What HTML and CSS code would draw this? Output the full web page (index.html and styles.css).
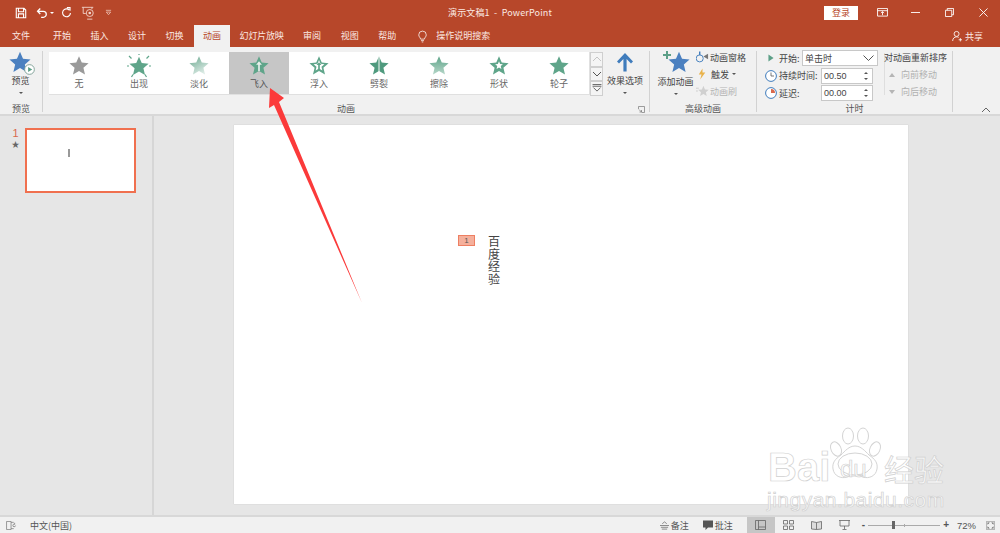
FILE: index.html
```html
<!DOCTYPE html>
<html lang="zh-CN">
<head>
<meta charset="utf-8">
<title>演示文稿1 - PowerPoint</title>
<link rel="stylesheet" href="styles.css">
</head>
<body>
<svg class="defs" width="0" height="0">
  <defs>
    <linearGradient id="fade" x1="0" y1="0" x2="0.6" y2="1"><stop offset="0" stop-color="#6aa88f"/><stop offset="1" stop-color="#dcebe5"/></linearGradient>
    <linearGradient id="wipe" x1="0" y1="0" x2="0" y2="1"><stop offset="0" stop-color="#5fa58a"/><stop offset="1" stop-color="#b5d6c8"/></linearGradient>
    <linearGradient id="split" x1="0" y1="0" x2="1" y2="0"><stop offset="0" stop-color="#4f9a7e"/><stop offset=".42" stop-color="#4f9a7e"/><stop offset=".5" stop-color="#cfe3da"/><stop offset=".58" stop-color="#4f9a7e"/><stop offset="1" stop-color="#4f9a7e"/></linearGradient>
    <symbol id="star" viewBox="0 0 24 24"><path d="M12 .8l3.3 7.7 8.2.8-6.2 5.4 1.900 8.200-7.200-4.300-7.200 4.300 1.900-8.200L.5 9.300l8.200-.8z"/></symbol>
  </defs>
</svg>
<div class="app">
  <header class="titlebar">
    <div class="qat">
      <svg class="qi save" viewBox="0 0 14 14"><path d="M1.500 1.500h9l2 2v9h-11z M4 1.500v4h6v-4 M4 12.500v-4.500h6v4.500" fill="none" stroke="#fff" stroke-width="1.300"/></svg>
      <svg class="qi undo" viewBox="0 0 14 14"><path d="M2 5h6.500a3.500 3.500 0 0 1 0 7H6 M5 1.800L1.800 5 5 8.200" fill="none" stroke="#fff" stroke-width="1.500"/></svg>
      <span class="caret white"></span>
      <svg class="qi redo" viewBox="0 0 14 14"><path d="M10.500 3.800a5 5 0 1 0 1.500 3.700 M7.500 .8h4v4" fill="none" stroke="#fff" stroke-width="1.400"/></svg>
      <svg class="qi touch" viewBox="0 0 16 16"><path d="M1 1.500h13 M2.500 1.500v7h3 M12.500 1.500v2" fill="none" stroke="#f4d8cf" stroke-width="1"/><circle cx="10" cy="8" r="4" fill="none" stroke="#f4d8cf"/><circle cx="10" cy="8" r="1.500" fill="#f4d8cf"/><path d="M7 15h6" stroke="#f4d8cf"/></svg>
      <svg class="qi more" viewBox="0 0 8 8"><path d="M1 1.500h6 M1.500 3.500h5l-2.500 3z" fill="none" stroke="#eec5b8" stroke-width=".9"/></svg>
    </div>
    <div class="doc-title">演示文稿1 &nbsp;-&nbsp; PowerPoint</div>
    <div class="winctl">
      <span class="login">登录</span>
      <svg class="wi ribbon-opt" viewBox="0 0 12 10"><path d="M.5.500h11v8.500H.5z M.5 3h11" fill="none" stroke="#fff"/><path d="M6 8V4M4.300 5.700L6 4l1.700 1.700" fill="none" stroke="#fff"/></svg>
      <svg class="wi min" viewBox="0 0 10 10"><path d="M0 5h10" stroke="#fff"/></svg>
      <svg class="wi restore" viewBox="0 0 10 10"><path d="M.5 2.500h7v7h-7z M2.500 2.500v-2h7v7h-2" fill="none" stroke="#fff"/></svg>
      <svg class="wi close" viewBox="0 0 10 10"><path d="M.5.500l9 9M9.500.500l-9 9" stroke="#fff"/></svg>
    </div>
  </header>

  <nav class="tabs">
    <span class="tab">文件</span>
    <span class="tab start">开始</span>
    <span class="tab">插入</span>
    <span class="tab">设计</span>
    <span class="tab">切换</span>
    <span class="tab active">动画</span>
    <span class="tab after-active">幻灯片放映</span>
    <span class="tab">审阅</span>
    <span class="tab">视图</span>
    <span class="tab">帮助</span>
    <svg class="bulb" viewBox="0 0 12 16"><path d="M3.500 11.500C3 9 1 8.500 1 5.800a5 5 0 0 1 10 0c0 2.700-2 3.200-2.500 5.700z M4 13.500h4 M5 15.300h2" fill="none" stroke="#fff"/></svg>
    <span class="tab search">操作说明搜索</span>
    <span class="share">
      <svg class="share-ico" viewBox="0 0 12 13"><circle cx="5.500" cy="4" r="3" fill="none" stroke="#fff"/><path d="M.8 12.500c0-3 2-5 4.700-5 1 0 1.800.2 2.500.7 M8 11h4M10 9v4" fill="none" stroke="#fff"/></svg>
      共享
    </span>
  </nav>

  <section class="ribbon">
    <div class="group g-preview">
      <div class="g-body preview-btn">
        <span class="preview-ico">
          <svg class="s22 blue"><use href="#star"/></svg>
          <svg class="play" viewBox="0 0 12 12"><circle cx="6" cy="6" r="5.300" fill="#fff" stroke="#7c9f95"/><path d="M4.500 3.200L9 6l-4.500 2.800z" fill="#5c9f87"/></svg>
        </span>
        <span class="lbl">预览</span>
        <span class="caret"></span>
      </div>
      <div class="g-label">预览</div>
    </div>

    <div class="group g-anim">
      <div class="g-body anim-row">
        <div class="gallery">
          <div class="gi"><svg class="s20 grey"><use href="#star"/></svg><span class="lbl">无</span></div>
          <div class="gi">
            <svg class="s26" viewBox="0 0 26 24"><use href="#star" x="3" y="2" width="20" height="20" class="green"/><path d="M3 2l2.500 2.500M23 2l-2.500 2.500M13 0v1M1 12h2M25 12h-2M5.500 23l1.500-2.500M20.500 23l-1.500-2.500" stroke="#5fa58a" stroke-width="1.200" fill="none"/></svg>
            <span class="lbl">出现</span>
          </div>
          <div class="gi"><svg class="s20 fade"><use href="#star"/></svg><span class="lbl">淡化</span></div>
          <div class="gi selected">
            <svg class="s20 green" viewBox="0 0 24 24"><use href="#star"/><path d="M12 7l3.500 4H13v7.500h-2V11H8.500z" fill="#e8f0ec"/></svg>
            <span class="lbl">飞入</span>
          </div>
          <div class="gi">
            <svg class="s20" viewBox="0 0 24 24"><use href="#star" class="green"/><path d="M12 5.500l1.800 4.500 4.700.4-3.500 3 1 4.600-4-2.500-4 2.500 1-4.600-3.500-3 4.700-.4z" fill="#fff"/><path d="M12 8l3 3.500h-2V17h-2v-5.500H9z" fill="#5fa58a"/></svg>
            <span class="lbl">浮入</span>
          </div>
          <div class="gi"><svg class="s20 split"><use href="#star"/></svg><span class="lbl">劈裂</span></div>
          <div class="gi"><svg class="s20 wipe"><use href="#star"/></svg><span class="lbl">擦除</span></div>
          <div class="gi">
            <svg class="s20" viewBox="0 0 24 24"><use href="#star" class="green"/><path d="M12 7l1.300 3.200 3.400.3-2.600 2.200.8 3.400-2.900-1.800-2.900 1.800.8-3.400-2.600-2.200 3.400-.3z" fill="#fff"/></svg>
            <span class="lbl">形状</span>
          </div>
          <div class="gi"><svg class="s20 green"><use href="#star"/></svg><span class="lbl">轮子</span></div>
        </div>
        <div class="gal-scroll">
          <span class="gs"><svg viewBox="0 0 10 6"><path d="M1 5l4-4 4 4" fill="none" stroke="#c4c4c4"/></svg></span>
          <span class="gs"><svg viewBox="0 0 10 6"><path d="M1 1l4 4 4-4" fill="none" stroke="#555"/></svg></span>
          <span class="gs"><svg viewBox="0 0 10 9"><path d="M0 .5h10M0 2.500h10M1 4l4 4 4-4" fill="none" stroke="#555"/></svg></span>
        </div>
        <div class="big-btn effect">
          <svg class="arrow-up" viewBox="0 0 18 20"><path d="M9 1L1 9.500l2 2L7.400 7v12.500h3.200V7l4.400 4.500 2-2z" fill="#3f7cbc"/></svg>
          <span class="lbl">效果选项</span>
          <span class="caret"></span>
        </div>
      </div>
      <div class="g-label">动画<svg class="launcher" viewBox="0 0 7 7"><path d="M.5 3V.5H6.500v6H3.500 M1 3.500l2.500 2.500M3.500 4v2H1.500" fill="none" stroke="#777" stroke-width=".7"/></svg></div>
    </div>

    <div class="group g-adv">
      <div class="g-body adv-row">
        <div class="big-btn add">
          <span class="add-ico">
            <svg class="s22 blue"><use href="#star"/></svg>
            <svg class="plus" viewBox="0 0 8 8"><path d="M3 0h2v3h3v2H5v3H3V5H0V3h3z" fill="#5c9f87"/></svg>
          </span>
          <span class="lbl">添加动画</span>
          <span class="caret"></span>
        </div>
        <div class="adv-list">
          <div class="adv-item">
            <svg class="small-i" viewBox="0 0 14 12"><circle cx="4" cy="7.500" r="3.800" fill="none" stroke="#3f7cbc"/><path d="M4 0v4" stroke="#3f7cbc" stroke-width="1.500"/><path d="M8 5.500l5-3v6z" fill="#777"/></svg>
            <span>动画窗格</span>
          </div>
          <div class="adv-item">
            <svg class="small-i" viewBox="0 0 14 12"><path d="M7 0L3 6.500h3L4.500 12 10 4.500H7z" fill="#e9b24a"/></svg>
            <span class="wide">触发</span><span class="caret inline"></span>
          </div>
          <div class="adv-item off">
            <svg class="small-i" viewBox="0 0 14 12"><use href="#star" x="2" width="12" height="12" class="lightgrey"/><path d="M0 3h3M0 6h2" stroke="#ccc"/></svg>
            <span>动画刷</span>
          </div>
        </div>
      </div>
      <div class="g-label">高级动画</div>
    </div>

    <div class="group g-time">
      <div class="g-body time-row">
        <div class="time-form">
          <div class="tf-row">
            <svg class="ti-play" viewBox="0 0 7 9"><path d="M.5.500L6.500 4.500.5 8.500z" fill="#5c9f87"/></svg>
            <span class="tf-lbl">开始:</span>
            <span class="select">单击时<svg viewBox="0 0 11 6"><path d="M.5.500L5.500 5.500 10.500.5" fill="none" stroke="#555"/></svg></span>
          </div>
          <div class="tf-row">
            <svg class="ti-clock" viewBox="0 0 12 12"><circle cx="6" cy="6" r="5.400" fill="#fff" stroke="#3f7cbc"/><path d="M6 2.500V6h3" fill="none" stroke="#555" stroke-width=".8"/></svg>
            <span class="tf-lbl long">持续时间:</span>
            <span class="spin">00.50<i class="spin-btns"><b></b><b class="down"></b></i></span>
          </div>
          <div class="tf-row">
            <svg class="ti-clock" viewBox="0 0 12 12"><circle cx="6" cy="6" r="5.400" fill="#fff" stroke="#3f7cbc"/><path d="M6 2v4h4a4 4 0 0 0-4-4z" fill="#d9694d"/></svg>
            <span class="tf-lbl short">延迟:</span>
            <span class="spin">00.00<i class="spin-btns"><b></b><b class="down"></b></i></span>
          </div>
        </div>
        <div class="reorder">
          <div class="re-title">对动画重新排序</div>
          <div class="re-item"><i class="tri"></i>向前移动</div>
          <div class="re-item"><i class="tri down"></i>向后移动</div>
        </div>
      </div>
      <div class="g-label">计时</div>
    </div>
    <svg class="collapse" viewBox="0 0 10 6"><path d="M1 5l4-4 4 4" fill="none" stroke="#666"/></svg>
  </section>

  <main class="workspace">
    <aside class="thumbs">
      <div class="thumb-meta"><span class="thumb-num">1</span><span class="thumb-star">★</span></div>
      <div class="thumb"><i class="thumb-mark"></i></div>
    </aside>
    <div class="stage">
      <div class="slide">
        <div class="slide-content">
          <span class="anim-tag">1</span>
          <div class="vtext">百度经验</div>
        </div>
      </div>
    </div>
  </main>

  <footer class="status">
    <svg class="st-notes" viewBox="0 0 12 10"><path d="M.5.500h5v9h-5z M5.500 1.500h3M5.500 8.500h3M9.500 2v2M10.500 5a1.500 1.500 0 1 1-1-1.500" fill="none" stroke="#777" stroke-width=".8"/></svg>
    <span class="st-lang">中文(中国)</span>
    <span class="st-right">
      <span class="st-item">
        <svg class="st-i" viewBox="0 0 10 10"><path d="M2.500 3L5 1l2.500 2M0 5h10M1 7h8M2 9h6" fill="none" stroke="#666" stroke-width=".8"/></svg>备注
      </span>
      <span class="st-item">
        <svg class="st-i c" viewBox="0 0 10 10"><path d="M0 .5h10v7H5L2.500 10V7.500H0z" fill="#555"/></svg>批注
      </span>
      <span class="view on"><svg viewBox="0 0 11 10"><path d="M.5.500h10v9H.5zM3.500.500v9M3.500 7h7" fill="none" stroke="#666" stroke-width=".8"/></svg></span>
      <span class="view"><svg viewBox="0 0 11 10"><path d="M.5.500h4v3.500h-4zM6.500.500h4v3.500h-4zM.5 6h4v3.500h-4zM6.500 6h4v3.500h-4z" fill="none" stroke="#666" stroke-width=".8"/></svg></span>
      <span class="view"><svg viewBox="0 0 11 10"><path d="M.5 1.500l5 1 5-1v7.500l-5 .5-5-.5zM5.500 2.500v7" fill="#ddd" stroke="#666" stroke-width=".8"/></svg></span>
      <span class="view"><svg viewBox="0 0 11 10"><path d="M0 .5h11M1 .5v5.500h9V.5M5.500 6v3M3.500 9.500h4" fill="none" stroke="#666" stroke-width=".8"/></svg></span>
      <span class="zoomer">
        <span class="z-btn">-</span>
        <span class="z-track"><i class="z-thumb"></i><i class="z-mid"></i></span>
        <span class="z-btn">+</span>
      </span>
      <span class="z-pct">72%</span>
      <svg class="fit" viewBox="0 0 12 12"><path d="M.5.500h11v11H.5z" fill="none" stroke="#999"/><path d="M2 2h3L2 5zM10 2v3L7 2zM2 10V7l3 3zM10 10H7l3-3z" fill="#666"/></svg>
    </span>
  </footer>

  <svg class="pointer" viewBox="0 0 110 230"><path d="M2 3L16 13 11 17 94 218 6 20 1 23z" fill="#fb3a3a"/></svg>

  <div class="watermark">
    <svg class="paw" viewBox="0 0 54 54"><g fill="rgba(255,255,255,.7)" stroke="#d4d4d4" stroke-width="1"><ellipse cx="8" cy="22" rx="5" ry="7.500" transform="rotate(-25 8 22)"/><ellipse cx="20" cy="9" rx="5.500" ry="8"/><ellipse cx="35" cy="9" rx="5.500" ry="8"/><ellipse cx="47" cy="22" rx="5" ry="7.500" transform="rotate(25 47 22)"/><path d="M27 19c6 0 10 5 14 9 6 4 9 8 8 14-1 7-8 10-14 8-3-1-5-1-8-1s-5 0-8 1c-6 2-13-1-14-8-1-6 2-10 8-14 4-4 8-9 14-9z"/></g><ellipse cx="27" cy="37" rx="17" ry="11" fill="none" stroke="#d4d4d4"/></svg>
    <span class="wm-bai">Bai</span><span class="wm-du">du</span><span class="wm-jy">经验</span>
    <span class="wm-url">jingyan.baidu.com</span>
  </div>
</div>
</body>
</html>
```
FILE: styles.css
```css
* { box-sizing: border-box; }
html, body { margin: 0; height: 100%; overflow: hidden; }
body { font-family: "Noto Sans CJK SC", "Liberation Sans", sans-serif; font-size: 9px; color: #444; }
.defs { position: absolute; }
.app { position: relative; width: 1000px; height: 533px; display: flex; flex-direction: column; background: #e6e6e6; overflow: hidden; }

/* title bar */
.titlebar { height: 25px; background: #b7472a; display: grid; grid-template-columns: 1fr auto 1fr; align-items: center; color: #fff; }
.qat { display: flex; align-items: center; padding-left: 15px; }
.qi { display: block; }
.save { width: 12px; height: 12px; margin-right: 9px; }
.undo { width: 12px; height: 12px; margin-right: 2px; }
.redo { width: 11px; height: 11px; margin-left: 7px; margin-right: 9px; }
.touch { width: 14px; height: 14px; margin-right: 10px; }
.more { width: 7px; height: 7px; }
.caret { display: block; width: 0; height: 0; border: 2px solid transparent; border-top: 2.500px solid #555; border-bottom: 0; }
.caret.white { border-top-color: #fff; }
.doc-title { font-size: 9px; color: #fbe9e3; letter-spacing: .15px; }
.winctl { display: flex; align-items: center; justify-content: flex-end; }
.login { width: 34px; height: 14px; background: #fff; color: #b7472a; font-size: 9px; line-height: 14px; text-align: center; margin-right: 19px; }
.wi { display: block; }
.ribbon-opt { width: 11px; height: 9px; margin-right: 23px; }
.min { width: 9px; height: 9px; margin-right: 25px; }
.restore { width: 9px; height: 9px; margin-right: 25px; }
.close { width: 9px; height: 9px; margin-right: 12px; }

/* tabs */
.tabs { height: 22px; background: #b7472a; display: flex; align-items: center; gap: 19.500px; padding-left: 12px; color: #fbe9e3; position: relative; }
.tab { line-height: 22px; }
.tab.start { margin-left: 3.500px; }
.tab.active { background: #f1f1f1; color: #b7472a; padding: 0 9px; margin: 0 -9px; }
.tab.after-active { margin-left: -1px; letter-spacing: -.2px; }
.bulb { width: 9px; height: 13px; margin-left: 2px; margin-right: -10px; }
.share { margin-left: auto; margin-right: 17px; display: flex; align-items: center; gap: 3px; }
.share-ico { width: 10px; height: 12px; }

/* ribbon */
.ribbon { height: 69px; background: #f1f1f1; display: flex; position: relative; border-bottom: 2px solid #d8d8d8; color: #444; }
.group { display: flex; flex-direction: column; border-right: 1px solid #d2d2d2; margin: 4px 0 2px; }
.g-body { height: 52px; flex: none; }
.g-label { text-align: center; line-height: 12px; position: relative; color: #555; }
.g-preview { width: 43px; }
.g-anim { width: 607px; }
.g-adv { width: 107px; }
.g-time { width: 196px; }
.preview-btn { display: flex; flex-direction: column; align-items: center; width: 42px; padding-right: 1px; }
.preview-ico { position: relative; width: 22px; height: 23px; margin-left: -2px; display: block; }
.s22 { width: 22px; height: 22px; display: block; }
.s20 { width: 20px; height: 20px; display: block; }
.s26 { width: 26px; height: 24px; display: block; }
.blue { fill: #4b80c0; }
.grey { fill: #9a9a9a; }
.green { fill: #5fa58a; }
.lightgrey { fill: #d0d0d0; }
.fade { fill: url(#fade); }
.wipe { fill: url(#wipe); }
.split { fill: url(#split); }
.play { position: absolute; right: -4px; bottom: -1px; width: 11px; height: 11px; }
.lbl { line-height: 12px; display: block; }
.preview-btn .lbl { margin-top: 1px; }
.preview-btn .caret { margin-top: 5px; }

.anim-row { display: flex; padding-left: 6px; }
.gallery { width: 541px; height: 43px; margin-top: 1px; background: #fff; border-bottom: 1px solid #e0e0e0; border-right: 1px solid #e0e0e0; display: flex; flex: none; }
.gi { width: 60px; height: 42px; display: flex; flex-direction: column; align-items: center; color: #666; padding-top: 3px; position: relative; }
.gi svg { flex: none; height: 21px; margin-bottom: 2px; }
.gi .s26 { height: 24px; margin: -1px 0 0; }
.gi.selected { background: #c6c6c6; color: #555; }
.gal-scroll { width: 13px; display: flex; flex-direction: column; flex: none; margin-top: 1px; }
.gs { height: 14.500px; border: 1px solid #cfcfcf; background: #f4f4f4; display: flex; align-items: center; justify-content: center; }
.gs svg { width: 10px; height: 8px; display: block; }
.big-btn { display: flex; flex-direction: column; align-items: center; }
.effect { width: 44px; margin-left: 0; }
.arrow-up { width: 18px; height: 20px; display: block; margin-bottom: 3px; margin-top: 1px; }
.effect .lbl { color: #444; }
.big-btn .caret { margin-top: 5px; }
.launcher { position: absolute; right: 4px; top: 3px; width: 7px; height: 7px; }

.adv-row { display: flex; padding-left: 7px; }
.add { width: 37px; }
.add-ico { position: relative; width: 24px; height: 24px; display: block; margin-left: 5px; }
.add-ico .s22 { position: absolute; left: 2px; top: 0; }
.plus { position: absolute; left: -3px; top: 0; width: 8px; height: 8px; }
.add .lbl { margin-top: 1px; white-space: nowrap; }
.adv-list { margin-left: 2px; display: flex; flex-direction: column; gap: 5px; }
.adv-item { display: flex; align-items: center; height: 12px; white-space: nowrap; gap: 1px; }
.small-i { width: 13px; height: 12px; display: block; flex: none; }
.adv-item.off { color: #b5b5b5; }
.adv-item .wide { margin-left: 1px; }
.caret.inline { margin-left: 2px; }

.time-row { display: flex; padding-left: 8px; margin-top: -1px; height: 53px; }
.time-form { width: 113px; display: flex; flex-direction: column; gap: 1px; }
.tf-row { display: flex; align-items: center; height: 16.500px; white-space: nowrap; }
.ti-play { width: 6px; height: 8px; margin: 0 5px 0 3px; flex: none; }
.ti-clock { width: 12px; height: 12px; margin-right: 2px; flex: none; }
.tf-lbl { width: 23px; }
.tf-lbl.long { width: 42px; }
.tf-lbl.short { width: 42px; }
.select { width: 76px; height: 16px; background: #fff; border: 1px solid #c8c8c8; display: flex; align-items: center; justify-content: space-between; padding: 0 3px 0 2px; }
.select svg { width: 11px; height: 6px; }
.spin { width: 52px; height: 16px; background: #fff; border: 1px solid #c8c8c8; display: flex; align-items: center; justify-content: space-between; padding: 0 4px 0 2px; font-family: "Liberation Sans", sans-serif; font-size: 9px; }
.spin-btns { display: flex; flex-direction: column; gap: 4px; }
.spin-btns b { display: block; width: 0; height: 0; border: 2px solid transparent; border-top: 0; border-bottom: 2px solid #555; }
.spin-btns b.down { border-bottom: 0; border-top: 2px solid #555; }
.reorder { margin-left: 6px; border-left: 1px solid #dedede; height: 42px; margin-top: 3px; }
.re-title { margin-left: -1px; margin-top: -1px; line-height: 12px; white-space: nowrap; margin-bottom: 5px; }
.re-item { color: #b0b0b0; display: flex; align-items: center; line-height: 12px; margin-bottom: 5px; padding-left: 4px; gap: 6px; }
.tri { display: block; width: 0; height: 0; border: 3px solid transparent; border-top: 0; border-bottom: 4px solid #b5b5b5; }
.tri.down { border-bottom: 0; border-top: 4px solid #b5b5b5; }
.collapse { position: absolute; right: 9px; bottom: 1px; width: 10px; height: 6px; }

/* workspace */
.workspace { flex: 1; display: flex; min-height: 0; border-bottom: 2px solid #d8d8d8; }
.thumbs { width: 154px; display: flex; padding: 12px 0 0 9px; border-right: 2px solid #d6d6d6; align-items: flex-start; gap: 3px; }
.thumb-meta { width: 13px; display: flex; flex-direction: column; align-items: center; line-height: 11px; }
.thumb-num { color: #d9694d; font-size: 11px; font-family: "Liberation Sans", sans-serif; }
.thumb-star { color: #666; font-size: 8px; line-height: 9px; }
.thumb { width: 111px; height: 65px; background: #fff; border: 2px solid #f0704f; padding: 19px 0 0 41px; }
.thumb-mark { width: 2px; height: 8px; background: #999; display: block; }
.stage { flex: 1; display: flex; padding: 9px 0 0 80px; }
.slide { width: 674px; height: 379px; background: #fff; box-shadow: 0 0 1px #bbb; padding: 110px 0 0 224px; }
.slide-content { display: flex; align-items: flex-start; gap: 13px; }
.anim-tag { width: 17px; height: 11px; background: #f5b09c; border: 1px solid #ee7f62; color: #555; font-size: 8px; line-height: 9px; text-align: center; font-family: "Liberation Sans", sans-serif; }
.vtext { width: 12px; font-size: 12px; line-height: 12.700px; color: #444; word-break: break-all; }

/* status bar */
.status { height: 16px; background: #f1f1f1; display: flex; align-items: center; color: #555; flex: none; }
.st-notes { width: 11px; height: 9px; margin-left: 6px; }
.st-lang { margin-left: 13px; }
.st-right { margin-left: auto; display: flex; align-items: center; height: 16px; }
.st-item { display: flex; align-items: center; gap: 2px; margin-right: 14px; }
.st-i { width: 9px; height: 9px; }
.st-i.c { width: 10px; height: 10px; }
.view { width: 28px; height: 16px; display: flex; align-items: center; justify-content: center; }
.view svg { width: 11px; height: 10px; }
.view.on { background: #c6c6c6; }
.zoomer { display: flex; align-items: center; gap: 3px; margin-left: 3px; }
.z-btn { font-family: "Liberation Sans", sans-serif; font-size: 10px; font-weight: bold; line-height: 10px; color: #555; }
.z-track { width: 72px; height: 1px; background: #aaa; position: relative; display: block; }
.z-thumb { position: absolute; left: 24px; top: -4px; width: 3px; height: 8px; background: #666; }
.z-mid { position: absolute; left: 36px; top: -1px; width: 1px; height: 3px; background: #aaa; }
.z-pct { font-family: "Liberation Sans", sans-serif; font-size: 9.500px; margin-left: 8px; }
.fit { width: 9px; height: 9px; margin: 0 5px 0 10px; }

/* overlays */
.pointer { position: absolute; left: 268px; top: 85px; width: 110px; height: 230px; }
.watermark { position: absolute; left: 765px; top: 425px; width: 185px; height: 90px; pointer-events: none; }
.paw { position: absolute; left: 63px; top: 2px; width: 54px; height: 54px; }
.wm-bai, .wm-du, .wm-jy, .wm-url { position: absolute; font-family: "Liberation Sans", sans-serif; color: rgba(255,255,255,.8); -webkit-text-stroke: .7px #d0d0d0; white-space: nowrap; }
.wm-bai { left: 3px; top: 19px; font-size: 40px; line-height: 46px; font-weight: bold; }
.wm-du { left: 75px; top: 31px; font-size: 24px; line-height: 26px; }
.wm-jy { left: 119px; top: 25px; font-size: 30px; line-height: 36px; font-family: "Noto Sans CJK SC", sans-serif; }
.wm-url { left: 2px; top: 62px; font-size: 21px; line-height: 26px; letter-spacing: .5px; }
```
